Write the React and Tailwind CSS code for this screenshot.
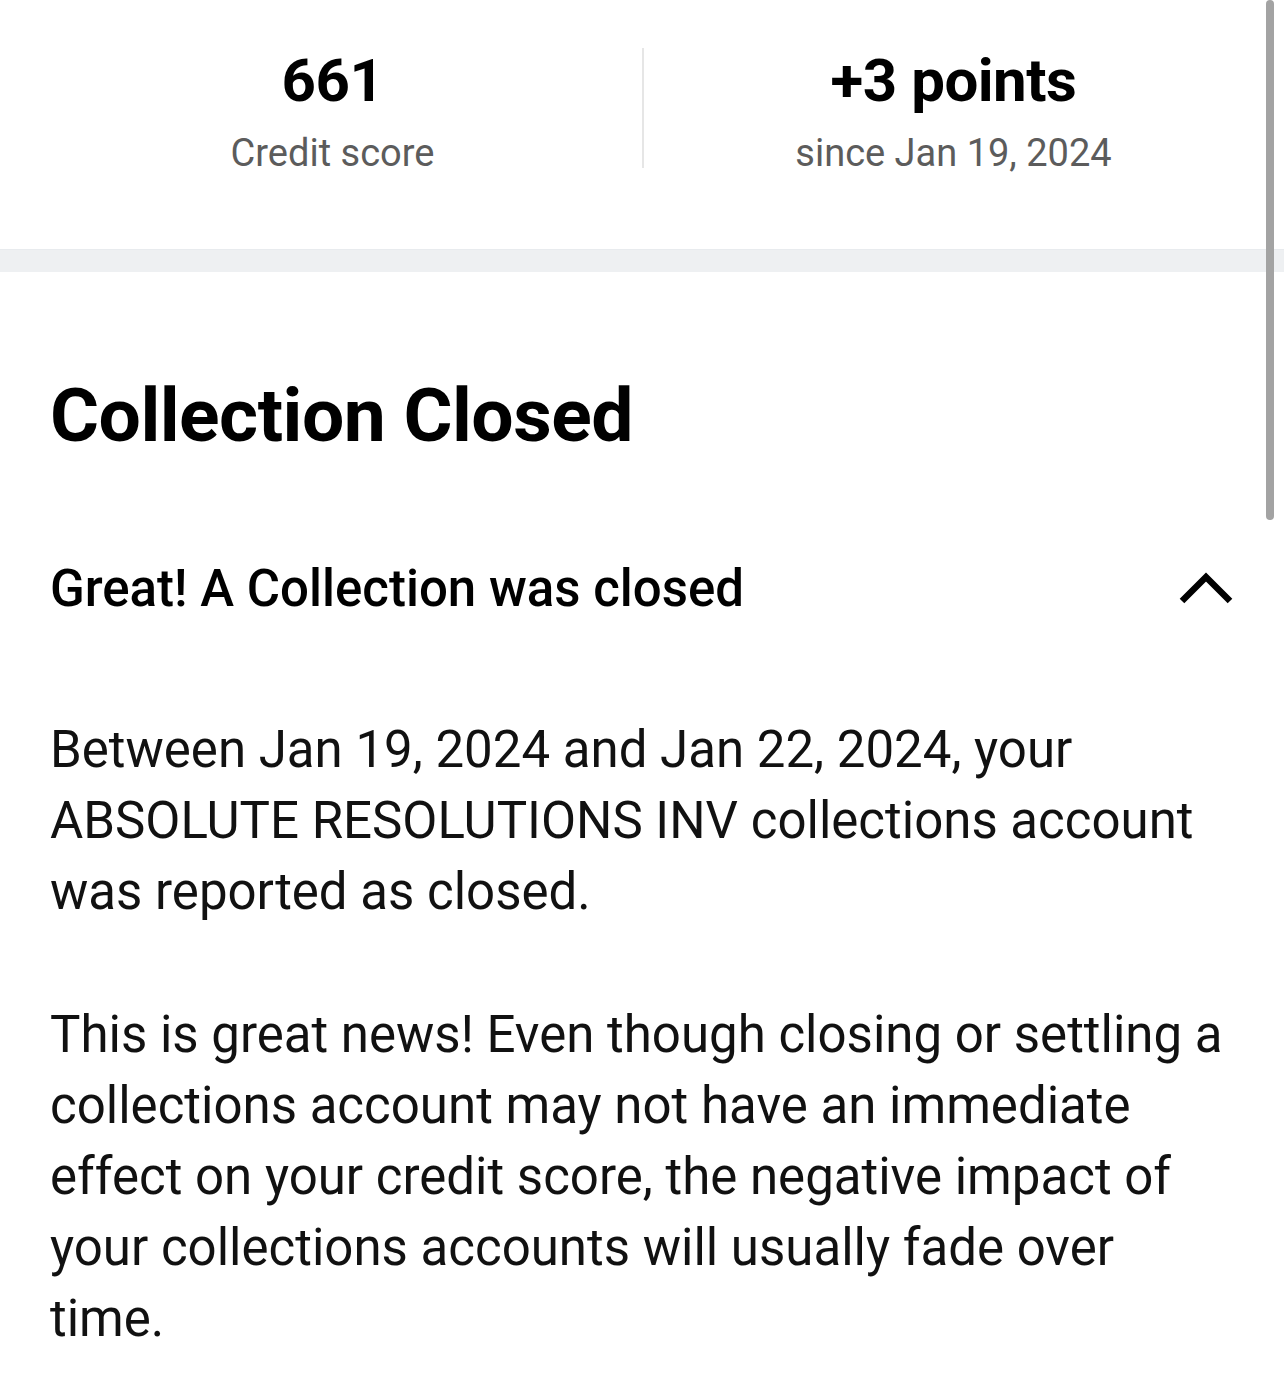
// Score summary across the top: two stat columns split by a thin rule
function StatColumn({ value, label }) {
  return (
    <div className="flex-1 flex flex-col items-center">
      <div className="text-[60px] leading-[72px] font-bold text-black tracking-[-0.5px]">{value}</div>
      <div className="mt-[8px] text-[38px] leading-[56px] text-[#5c5c5c]">{label}</div>
    </div>
  );
}

// Thick-stroked chevron used by the expandable row
function Chevron() {
  return (
    <svg width="54" height="34" viewBox="0 0 54 34" fill="none" className="mr-[1px] -mt-[4px]">
      <polyline points="3,31 27,7 51,31" stroke="#000" strokeWidth="6.5" strokeLinejoin="miter" />
    </svg>
  );
}

export default function App() {
  return (
    <div className="relative w-[1284px] min-h-[1393px] bg-white overflow-hidden" style={{ fontFamily: 'Roboto, "Liberation Sans", sans-serif' }}>
      {/* ── Stats header ── */}
      <div className="flex items-center pl-[23px] pr-[21px] pt-[45px] pb-[68px]">
        <StatColumn value="661" label="Credit score" />
        <div className="w-[2px] h-[120px] bg-[#e6e6e6] -mt-[10px]" />
        <StatColumn value="+3 points" label="since Jan 19, 2024" />
      </div>

      {/* ── Section separator ── */}
      <div className="h-[23px] bg-[#eef0f2] border-t border-[#e8ebee]" />

      {/* ── Detail content ── */}
      <div className="px-[50px] pt-[98px]">
        <h1 className="text-[75px] leading-[91px] font-bold text-black tracking-[-0.5px]">Collection Closed</h1>

        <div className="mt-[98px] flex items-center justify-between">
          <h2 className="text-[51px] leading-[60px] font-medium text-black">Great! A Collection was closed</h2>
          <Chevron />
        </div>

        <p className="mt-[95px] text-[51px] leading-[71px] text-[#111]">
          Between Jan 19, 2024 and Jan 22, 2024, your<br />
          ABSOLUTE RESOLUTIONS INV collections account<br />
          was reported as closed.
        </p>

        <p className="mt-[72px] text-[51px] leading-[71px] text-[#111]">
          This is great news! Even though closing or settling a<br />
          collections account may not have an immediate<br />
          effect on your credit score, the negative impact of<br />
          your collections accounts will usually fade over<br />
          time.
        </p>
      </div>

      {/* overlay scroll indicator */}
      <div className="absolute top-0 left-[1266px] w-[8px] h-[520px] rounded-full bg-[#a3a3a3]" />
    </div>
  );
}
